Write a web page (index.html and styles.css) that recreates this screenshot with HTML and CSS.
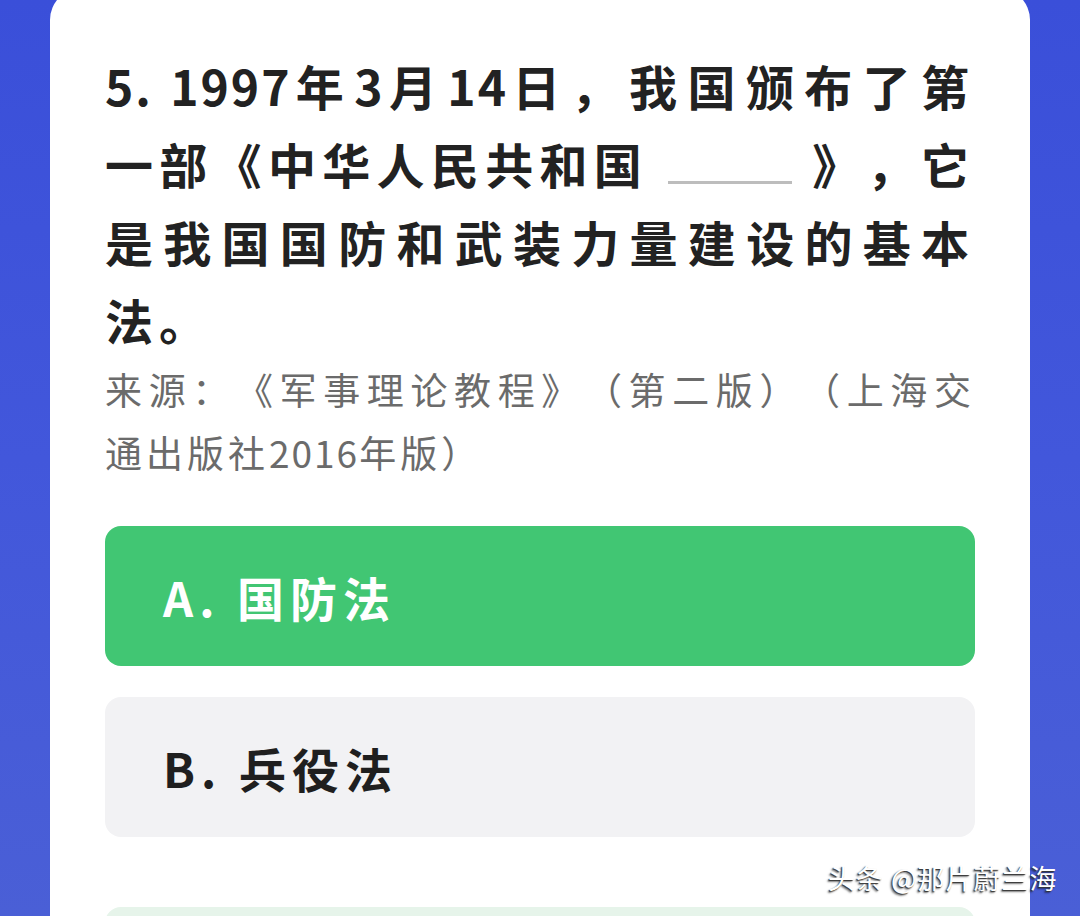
FILE: index.html
```html
<!DOCTYPE html>
<html lang="zh-CN">
<head>
<meta charset="utf-8">
<link rel="stylesheet" href="styles.css">
</head>
<body>
<div class="screen">
  <div class="card">
    <div class="question">
      <span class="line"><span class="num">5. 1997</span>年<span class="num">3</span>月<span class="num">14</span>日，我国颁布了第</span>
      <span class="line">一部《中华人民共和国<span class="blank"></span>》，它</span>
      <span class="line">是我国国防和武装力量建设的基本</span>
      <span class="line last">法。</span>
    </div>
    <div class="source">
      <span class="line">来源：《军事理论教程》（第二版）（上海交</span>
      <span class="line last">通出版社<span class="num">2016</span>年版）</span>
    </div>
    <div class="options">
      <div class="option correct">A. 国防法</div>
      <div class="option">B. 兵役法</div>
      <div class="option faded"></div>
    </div>
  </div>
  <div class="watermark">头条 @那片蔚兰海</div>
</div>
</body>
</html>
```
FILE: styles.css
```css
html, body {
  margin: 0;
  padding: 0;
}
body {
  width: 1080px;
  height: 916px;
  overflow: hidden;
  background: linear-gradient(180deg, #3a4fd9 0%, #4257db 50%, #4a5fd6 100%);
  font-family: "Noto Sans CJK SC", "Noto Sans", sans-serif;
}
.screen {
  position: relative;
  width: 1080px;
  height: 916px;
  overflow: hidden;
}
.card {
  margin: -12px 50px 0 50px;
  background: #ffffff;
  border-radius: 32px 32px 0 0;
  padding: 58px 55px 0 55px;
  height: 1000px;
}
.line {
  display: block;
  white-space: nowrap;
  text-align: justify;
  text-align-last: justify;
  text-spacing-trim: space-all;
}
.line.last {
  text-align-last: left;
}
.question {
  font-size: 48px;
  font-weight: 700;
  line-height: 78px;
  letter-spacing: 6px;
  color: #222222;
}
.question .num {
  letter-spacing: 2px;
}
.blank {
  display: inline-block;
  width: 124px;
  height: 40px;
  margin: 0 20px 0 20px;
  border-bottom: 3px solid #bdbdbd;
  vertical-align: baseline;
}
.source {
  font-size: 37px;
  line-height: 63px;
  letter-spacing: 4px;
  color: #6b6b6b;
}
.source .num {
  letter-spacing: 2px;
}
.options {
  margin-top: 42px;
  display: flex;
  flex-direction: column;
  gap: 31px;
}
.option {
  flex: none;
  height: 140px;
  border-radius: 16px;
  background: #f2f2f4;
  display: flex;
  align-items: center;
  padding-left: 58px;
  font-size: 47px;
  font-weight: 700;
  letter-spacing: 6px;
  color: #1f1f1f;
}
.option.correct {
  background: #41c673;
  color: #ffffff;
}
.option.faded {
  margin-top: 39px;
  background: #e6f4ea;
}
.watermark {
  position: absolute;
  left: 828px;
  top: 858px;
  font-size: 27px;
  line-height: 40px;
  color: #ffffff;
  letter-spacing: 1px;
  text-shadow: -1px 1px 1px #333, -2px 2px 2px rgba(0,0,0,0.5);
}
```
